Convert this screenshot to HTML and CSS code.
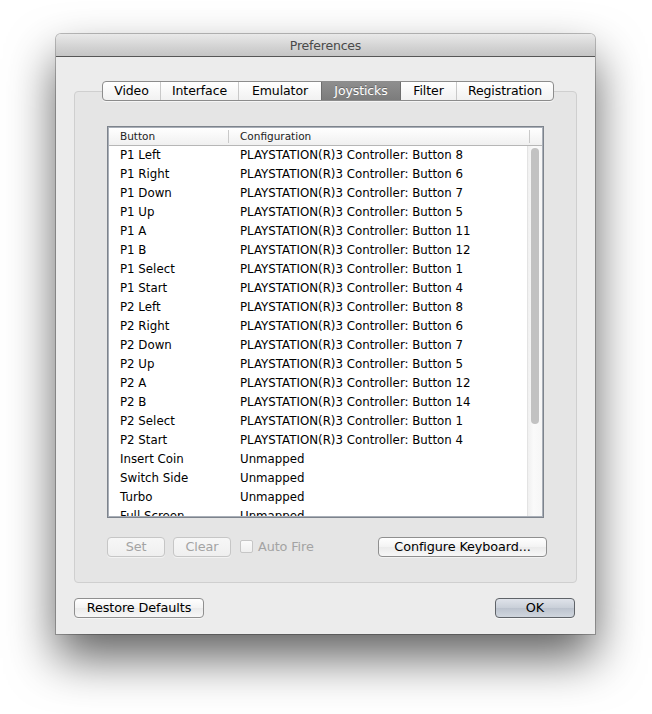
FILE: index.html
```html
<!DOCTYPE html>
<html>
<head>
<meta charset="utf-8">
<link rel="stylesheet" href="styles.css">
</head>
<body>
<div class="window">
  <div class="titlebar">Preferences</div>
  <div class="content">
    <div class="tabs">
      <div class="tab">Video</div>
      <div class="tab">Interface</div>
      <div class="tab">Emulator</div>
      <div class="tab selected">Joysticks</div>
      <div class="tab">Filter</div>
      <div class="tab">Registration</div>
    </div>
    <div class="group">
      <div class="table">
        <div class="thead">
          <div class="th c1">Button</div>
          <div class="th c2">Configuration</div>
          <div class="th c3"></div>
        </div>
        <div class="tbody">
          <div class="rows">
            <div class="row"><span class="c1">P1 Left</span><span class="c2">PLAYSTATION(R)3 Controller: Button 8</span></div>
            <div class="row"><span class="c1">P1 Right</span><span class="c2">PLAYSTATION(R)3 Controller: Button 6</span></div>
            <div class="row"><span class="c1">P1 Down</span><span class="c2">PLAYSTATION(R)3 Controller: Button 7</span></div>
            <div class="row"><span class="c1">P1 Up</span><span class="c2">PLAYSTATION(R)3 Controller: Button 5</span></div>
            <div class="row"><span class="c1">P1 A</span><span class="c2">PLAYSTATION(R)3 Controller: Button 11</span></div>
            <div class="row"><span class="c1">P1 B</span><span class="c2">PLAYSTATION(R)3 Controller: Button 12</span></div>
            <div class="row"><span class="c1">P1 Select</span><span class="c2">PLAYSTATION(R)3 Controller: Button 1</span></div>
            <div class="row"><span class="c1">P1 Start</span><span class="c2">PLAYSTATION(R)3 Controller: Button 4</span></div>
            <div class="row"><span class="c1">P2 Left</span><span class="c2">PLAYSTATION(R)3 Controller: Button 8</span></div>
            <div class="row"><span class="c1">P2 Right</span><span class="c2">PLAYSTATION(R)3 Controller: Button 6</span></div>
            <div class="row"><span class="c1">P2 Down</span><span class="c2">PLAYSTATION(R)3 Controller: Button 7</span></div>
            <div class="row"><span class="c1">P2 Up</span><span class="c2">PLAYSTATION(R)3 Controller: Button 5</span></div>
            <div class="row"><span class="c1">P2 A</span><span class="c2">PLAYSTATION(R)3 Controller: Button 12</span></div>
            <div class="row"><span class="c1">P2 B</span><span class="c2">PLAYSTATION(R)3 Controller: Button 14</span></div>
            <div class="row"><span class="c1">P2 Select</span><span class="c2">PLAYSTATION(R)3 Controller: Button 1</span></div>
            <div class="row"><span class="c1">P2 Start</span><span class="c2">PLAYSTATION(R)3 Controller: Button 4</span></div>
            <div class="row"><span class="c1">Insert Coin</span><span class="c2">Unmapped</span></div>
            <div class="row"><span class="c1">Switch Side</span><span class="c2">Unmapped</span></div>
            <div class="row"><span class="c1">Turbo</span><span class="c2">Unmapped</span></div>
            <div class="row"><span class="c1">Full Screen</span><span class="c2">Unmapped</span></div>
          </div>
          <div class="scrollbar"><div class="thumb"></div></div>
        </div>
      </div>
      <div class="actions">
        <div class="btn disabled set">Set</div>
        <div class="btn disabled clear">Clear</div>
        <div class="check"><span class="box"></span><span>Auto Fire</span></div>
        <div class="btn configure">Configure Keyboard...</div>
      </div>
    </div>
    <div class="footer">
      <div class="btn restore">Restore Defaults</div>
      <div class="btn ok">OK</div>
    </div>
  </div>
</div>
</body>
</html>
```

FILE: styles.css
```css
* { box-sizing: border-box; }
html, body { margin: 0; padding: 0; background: #ffffff; }
body {
  font-family: "DejaVu Sans", "Liberation Sans", sans-serif;
  color: #000;
  padding: 34px 0 0 56px;
  height: 714px;
  overflow: hidden;
}
.window {
  width: 539px;
  height: 600px;
  background: #ececec;
  border-radius: 5px 5px 0 0;
  box-shadow: 0 0 0 1px rgba(0,0,0,0.25), 0 24px 48px rgba(0,0,0,0.62);
  display: flex;
  flex-direction: column;
}
.titlebar {
  height: 23px;
  border-radius: 5px 5px 0 0;
  background: linear-gradient(#e9e9e9, #d2d2d2 60%, #c5c5c5);
  border-bottom: 1px solid #565656;
  text-align: center;
  font-size: 12.5px;
  line-height: 23px;
  color: #4a4a4a;
  letter-spacing: -0.2px;
}
.content {
  padding: 24px 18px 0 18px;
  display: flex;
  flex-direction: column;
}
.tabs {
  align-self: flex-start;
  margin-left: 28px;
  height: 20px;
  display: flex;
  border: 1px solid #8c8c8c;
  border-radius: 4px;
  background: linear-gradient(#ffffff, #f1f1f1);
  overflow: hidden;
  position: relative;
  z-index: 1;
  margin-bottom: -10px;
  box-shadow: 0 1px 0 rgba(255,255,255,0.6);
}
.tab {
  font-size: 12.5px;
  line-height: 18px;
  padding: 0 6px;
  border-left: 1px solid #c9c9c9;
  letter-spacing: -0.1px;
  text-align: center;
  white-space: nowrap;
}
.tab:first-child { border-left: none; }
.tabs .tab:nth-child(1) { width: 57px; }
.tabs .tab:nth-child(2) { width: 78px; }
.tabs .tab:nth-child(3) { width: 83px; }
.tabs .tab:nth-child(4) { width: 79px; }
.tabs .tab:nth-child(5) { width: 56px; }
.tabs .tab:nth-child(6) { width: 97px; }
.tab.selected {
  background: linear-gradient(#8e8e8e, #7c7c7c);
  color: #ffffff;
  border-left-color: #6e6e6e;
  text-shadow: 0 -1px 0 rgba(0,0,0,0.25);
}
.tab.selected + .tab { border-left-color: #6e6e6e; }
.group {
  height: 492px;
  border: 1px solid #cfcfcf;
  border-radius: 4px;
  background: #e5e5e5;
  padding: 34px 0 0 32px;
  display: flex;
  flex-direction: column;
}
.table {
  width: 437px;
  height: 392px;
  border: 1px solid #7d838c;
  box-shadow: inset 0 0 0 1px #a9afb8;
  background: #ffffff;
  display: flex;
  flex-direction: column;
  overflow: hidden;
  padding: 1px;
}
.thead {
  height: 18px;
  flex: none;
  display: flex;
  background: linear-gradient(#ffffff, #f0f0f0);
  border-bottom: 1px solid #b6b6b6;
  font-size: 10.5px;
  color: #222;
}
.th.c1 { width: 120px; padding-left: 11px; border-right: 1px solid #c9c9c9; margin: 2px 0; line-height: 13px; }
.th.c2 { width: 301px; padding-left: 11px; border-right: 1px solid #c9c9c9; margin: 2px 0; line-height: 13px; }
.th.c3 { flex: 1; }
.tbody {
  flex: 1;
  display: flex;
  overflow: hidden;
}
.rows {
  flex: 1;
}
.row {
  height: 19px;
  display: flex;
  font-size: 11.8px;
  line-height: 19px;
  white-space: nowrap;
}
.row .c1 { width: 120px; padding-left: 11px; flex: none; }
.row .c2 { padding-left: 11px; }
.scrollbar {
  width: 15px;
  flex: none;
  background: linear-gradient(90deg, #f0f0f0, #fafafa 40%, #f6f6f6);
  border-left: 1px solid #e3e3e3;
  padding: 2px 3px 0 3px;
}
.thumb {
  width: 8px;
  height: 276px;
  border-radius: 4px;
  background: #c2c2c2;
}
.actions {
  display: flex;
  align-items: center;
  margin-top: 18px;
  height: 21px;
}
.btn {
  height: 20px;
  border: 1px solid #8f8f8f;
  border-radius: 4px;
  background: linear-gradient(#ffffff, #f3f3f3 50%, #ebebeb 51%, #f7f7f7);
  font-size: 12.8px;
  line-height: 18px;
  text-align: center;
  letter-spacing: -0.1px;
  white-space: nowrap;
  box-shadow: 0 1px 0 rgba(255,255,255,0.5);
}
.btn.disabled {
  border-color: #c6c6c6;
  color: #a3a3a3;
  background: linear-gradient(#f7f7f7, #efefef);
}
.set { width: 58px; }
.clear { width: 58px; margin-left: 8px; }
.check {
  display: flex;
  align-items: center;
  margin-left: 9px;
  font-size: 12.8px;
  color: #a3a3a3;
  letter-spacing: -0.1px;
}
.check .box {
  width: 13px;
  height: 13px;
  border: 1px solid #c6c6c6;
  border-radius: 2px;
  background: linear-gradient(#fbfbfb, #efefef);
  margin-right: 5px;
}
.configure { width: 169px; margin-left: auto; margin-right: 29px; }
.footer {
  display: flex;
  justify-content: space-between;
  margin-top: 15px;
}
.restore { width: 130px; }
.ok {
  width: 80px;
  margin-right: 2px;
  border-color: #5f6368;
  background: linear-gradient(#dfe3ea, #c9cfd8 50%, #bcc3ce 51%, #d0d6de);
}
```
